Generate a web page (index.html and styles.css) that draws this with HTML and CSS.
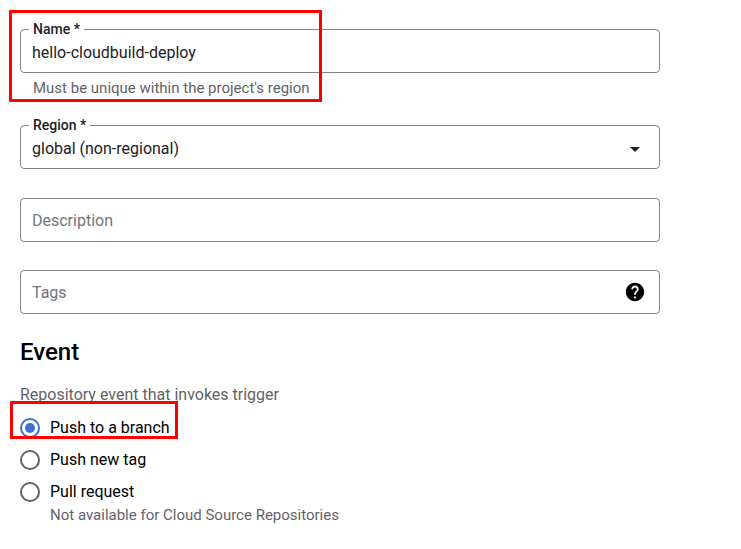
FILE: index.html
```html
<!DOCTYPE html>
<html lang="en">
<head>
<meta charset="utf-8">
<title>Create trigger</title>
<link rel="stylesheet" href="styles.css">
</head>
<body>
<div class="page">
  <div class="form">
    <div class="field-group">
      <fieldset class="field">
        <legend>Name *</legend>
        <div class="value">hello-cloudbuild-deploy</div>
      </fieldset>
      <div class="hint">Must be unique within the project's region</div>
    </div>

    <fieldset class="field select">
      <legend>Region *</legend>
      <div class="value-row">
        <span class="value">global (non-regional)</span>
        <svg class="arrow" width="24" height="24" viewBox="0 0 24 24" aria-hidden="true"><path d="M7 10l5 5 5-5z"/></svg>
      </div>
    </fieldset>

    <div class="box">
      <span class="placeholder">Description</span>
    </div>

    <div class="box">
      <span class="placeholder">Tags</span>
      <svg class="help" width="24" height="24" viewBox="0 0 24 24" aria-hidden="true"><path d="M12 2C6.48 2 2 6.48 2 12s4.48 10 10 10 10-4.48 10-10S17.52 2 12 2zm1 17h-2v-2h2v2zm2.070-7.750l-.9.92C13.45 12.9 13 13.5 13 15h-2v-.5c0-1.1.45-2.100 1.170-2.830l1.240-1.260c.37-.36.59-.86.59-1.410 0-1.100-.9-2-2-2s-2 .9-2 2H8c0-2.210 1.790-4 4-4s4 1.790 4 4c0 .88-.36 1.680-.93 2.250z"/></svg>
    </div>

    <h2 class="heading">Event</h2>
    <p class="sub">Repository event that invokes trigger</p>

    <div class="radios">
      <label class="radio first">
        <span class="ring checked"><span class="dot"></span></span>
        <span class="radio-text">Push to a branch</span>
      </label>
      <label class="radio">
        <span class="ring"></span>
        <span class="radio-text">Push new tag</span>
      </label>
      <div class="radio-block">
        <label class="radio">
          <span class="ring"></span>
          <span class="radio-text">Pull request</span>
        </label>
        <div class="radio-sub">Not available for Cloud Source Repositories</div>
      </div>
    </div>
  </div>

  <div class="annot annot-name"></div>
  <div class="annot annot-radio"></div>
</div>
</body>
</html>
```

FILE: styles.css
```css
* { box-sizing: border-box; }

html, body {
  margin: 0;
  padding: 0;
  background: #ffffff;
}

body {
  font-family: Roboto, "Liberation Sans", Arial, sans-serif;
  color: #202124;
}

.page {
  position: relative;
  width: 741px;
  height: 549px;
  overflow: hidden;
}

.form {
  padding: 21px 0 0 20px;
  width: 660px;
}

.field {
  margin: 0;
  border: 1px solid #80868b;
  border-radius: 4px;
  padding: 4px 11px 7px 11px;
  min-width: 0;
}

.field legend {
  margin-left: -3px;
  padding: 0 4px;
  font-size: 14px;
  line-height: 16px;
  font-weight: 500;
  color: #202124;
}

.value {
  font-size: 16px;
  line-height: 24px;
  color: #202124;
}

.hint {
  margin: 5px 0 0 13px;
  font-size: 15px;
  line-height: 20px;
  color: #5f6368;
}

.select {
  margin-top: 19px;
}

.value-row {
  display: flex;
  align-items: center;
  justify-content: space-between;
  height: 24px;
}

.arrow {
  fill: #202124;
  margin-right: 1px;
}

.box {
  margin-top: 29px;
  height: 44px;
  border: 1px solid #80868b;
  border-radius: 4px;
  padding: 2px 13px 0 11px;
  display: flex;
  align-items: center;
  justify-content: space-between;
}

.box + .box {
  margin-top: 28px;
}

.placeholder {
  font-size: 16px;
  line-height: 24px;
  color: #70757a;
}

.help {
  fill: #000000;
  width: 22px;
  height: 22px;
  margin-top: -2px;
}

.heading {
  margin: 24px 0 0 0;
  font-size: 24px;
  line-height: 28px;
  font-weight: 500;
  color: #000000;
}

.sub {
  margin: 19px 0 0 0;
  font-size: 16px;
  line-height: 20px;
  color: #5f6368;
}

.radios {
  margin-top: 6px;
  display: flex;
  flex-direction: column;
}

.radio {
  display: flex;
  align-items: center;
  height: 32px;
  gap: 10px;
}

.radio.first {
  height: 33px;
}

.ring {
  width: 20px;
  height: 20px;
  border: 2px solid #5f6368;
  border-radius: 50%;
  display: flex;
  align-items: center;
  justify-content: center;
  flex: none;
}

.ring.checked {
  border-color: #3c6fd8;
}

.dot {
  width: 10px;
  height: 10px;
  border-radius: 50%;
  background: #3c6fd8;
}

.radio-text {
  font-size: 16px;
  line-height: 24px;
  color: #000000;
}

.radio-sub {
  margin: -1px 0 0 30px;
  font-size: 15px;
  line-height: 16px;
  color: #5f6368;
}

.annot {
  position: absolute;
  border: 3px solid #ff0000;
  pointer-events: none;
}

.annot-name {
  left: 9px;
  top: 10px;
  width: 313px;
  height: 92px;
}

.annot-radio {
  left: 10px;
  top: 401px;
  width: 168px;
  height: 38px;
}
```
